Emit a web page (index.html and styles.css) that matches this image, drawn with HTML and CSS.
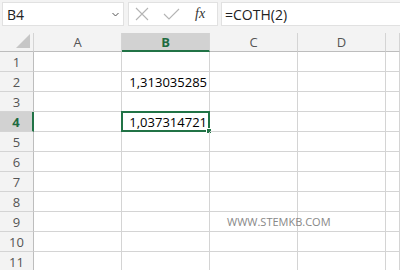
FILE: index.html
```html
<!DOCTYPE html>
<html>
<head>
  <title>COTH - Sheet</title>
  <meta name="viewport" content="width=device-width, initial-scale=1.0">
  <link rel="stylesheet" href="styles.css">
</head>
<body>
  <div class="toolbar">
    <div class="name-box">
      <span>B4</span>
      <svg class="chevron" width="7" height="5" viewBox="0 0 7 5"><path d="M0.5 1 L3.5 4 L6.5 1" fill="none" stroke="#555" stroke-width="1"/></svg>
    </div>
    <div class="formula-tools">
      <svg width="14" height="14" viewBox="0 0 14 14"><path d="M1 1 L13 13 M13 1 L1 13" stroke="#b4b4b4" stroke-width="1.1" fill="none"/></svg>
      <svg width="17" height="14" viewBox="0 0 17 14"><path d="M1 7 L6 12 L16 2" stroke="#b4b4b4" stroke-width="1.1" fill="none"/></svg>
      <span class="fx">fx</span>
    </div>
    <div class="formula-input">=COTH(2)</div>
  </div>

  <div class="sheet">
    <div class="corner"><span class="tri"></span></div>
    <div class="col-head">A</div>
    <div class="col-head active">B</div>
    <div class="col-head">C</div>
    <div class="col-head">D</div>
    <div class="col-head"></div>

    <div class="row-head">1</div><div class="cell"></div><div class="cell"></div><div class="cell"></div><div class="cell"></div><div class="cell"></div>
    <div class="row-head">2</div><div class="cell"></div><div class="cell num">1,313035285</div><div class="cell"></div><div class="cell"></div><div class="cell"></div>
    <div class="row-head">3</div><div class="cell"></div><div class="cell"></div><div class="cell"></div><div class="cell"></div><div class="cell"></div>
    <div class="row-head active">4</div><div class="cell"></div><div class="cell num selected">1,037314721<span class="handle"></span></div><div class="cell"></div><div class="cell"></div><div class="cell"></div>
    <div class="row-head">5</div><div class="cell"></div><div class="cell"></div><div class="cell"></div><div class="cell"></div><div class="cell"></div>
    <div class="row-head">6</div><div class="cell"></div><div class="cell"></div><div class="cell"></div><div class="cell"></div><div class="cell"></div>
    <div class="row-head">7</div><div class="cell"></div><div class="cell"></div><div class="cell"></div><div class="cell"></div><div class="cell"></div>
    <div class="row-head">8</div><div class="cell"></div><div class="cell"></div><div class="cell"></div><div class="cell"></div><div class="cell"></div>
    <div class="row-head">9</div><div class="cell"></div><div class="cell"></div><div class="cell watermark">WWW.STEMKB.COM</div><div class="cell"></div><div class="cell"></div>
    <div class="row-head">10</div><div class="cell"></div><div class="cell"></div><div class="cell"></div><div class="cell"></div><div class="cell"></div>
    <div class="row-head">11</div><div class="cell"></div><div class="cell"></div><div class="cell"></div><div class="cell"></div><div class="cell"></div>
  </div>
</body>
</html>
```

FILE: styles.css
```css
* {
  margin: 0;
  padding: 0;
  box-sizing: border-box;
}

body {
  font-family: 'Open Sans', 'Liberation Sans', sans-serif;
  background: #ffffff;
  width: 400px;
  height: 270px;
  overflow: hidden;
  color: #000;
}

.toolbar {
  display: flex;
  height: 33px;
  padding: 2px 0 0 2px;
  background: #f3f3f3;
}

.name-box {
  display: flex;
  align-items: center;
  justify-content: space-between;
  width: 122px;
  height: 24px;
  padding: 0 4px 0 4px;
  background: #fff;
  border: 1px solid #e1e1e1;
  font-size: 14px;
  color: #222;
}

.name-box .chevron {
  margin-top: 1px;
}

.formula-tools {
  display: flex;
  align-items: center;
  gap: 14px;
  width: 90px;
  height: 24px;
  margin-left: 4px;
  padding-left: 6px;
  background: #fff;
  border: 1px solid #e1e1e1;
}

.fx {
  font-family: 'Liberation Serif', serif;
  font-style: italic;
  font-size: 14px;
  color: #333;
  margin-left: 1px;
}

.formula-input {
  flex: 1;
  height: 24px;
  margin-left: 3px;
  padding: 2px 0 0 3px;
  background: #fff;
  border: 1px solid #e1e1e1;
  border-right: none;
  font-size: 14px;
  color: #222;
}

.sheet {
  display: grid;
  grid-template-columns: 34px 88px 88px 88px 88px 14px;
  grid-template-rows: 19px repeat(11, 20px);
}

.corner,
.col-head,
.row-head {
  background: #f3f3f3;
  color: #555;
  font-size: 13px;
}

.corner {
  position: relative;
  border-right: 1px solid #d4d4d4;
  border-bottom: 1px solid #bdbdbd;
}

.corner .tri {
  position: absolute;
  right: 3px;
  bottom: 3px;
  width: 0;
  height: 0;
  border-left: 14px solid transparent;
  border-bottom: 14px solid #c6c6c6;
}

.col-head {
  display: flex;
  align-items: center;
  justify-content: center;
  border-right: 1px solid #d4d4d4;
  border-bottom: 1px solid #bdbdbd;
}

.col-head.active {
  background: #d2d2d2;
  color: #1e6b41;
  font-weight: bold;
  border-bottom: 2px solid #217346;
}

.row-head {
  display: flex;
  align-items: center;
  justify-content: center;
  border-right: 1px solid #bdbdbd;
  border-bottom: 1px solid #d4d4d4;
}

.row-head.active {
  background: #d2d2d2;
  color: #1e6b41;
  font-weight: bold;
  border-right: 2px solid #217346;
}

.cell {
  position: relative;
  border-right: 1px solid #d4d4d4;
  border-bottom: 1px solid #d4d4d4;
  font-size: 13px;
  white-space: nowrap;
}

.num {
  display: flex;
  align-items: center;
  justify-content: flex-end;
  padding-right: 2px;
}

.selected {
  border: 2px solid #217346;
  margin: -1px 0 0 -1px;
  width: 89px;
  height: 21px;
  padding-right: 1px;
}

.handle {
  position: absolute;
  right: -4px;
  bottom: -4px;
  width: 6px;
  height: 6px;
  background: #217346;
  border: 1px solid #fff;
}

.watermark {
  display: flex;
  align-items: center;
  padding-left: 17px;
  overflow: visible;
  font-size: 11px;
  color: #888;
}
```
